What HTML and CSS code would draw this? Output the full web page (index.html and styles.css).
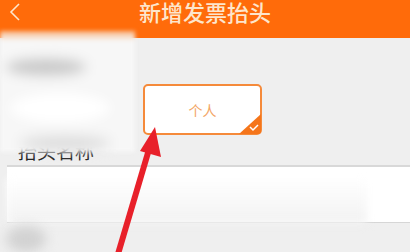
FILE: index.html
```html
<!DOCTYPE html>
<html lang="zh">

<head>
    <meta charset="UTF-8">
    <meta name="viewport" content="width=device-width, initial-scale=1.0">
    <title>新增发票抬头</title>
    <link rel="stylesheet" href="styles.css">
</head>

<body>

    <div class="header">
        <span class="back">
            <svg width="12" height="18" viewBox="0 0 12 18">
                <path d="M10 1 L2 9 L10 17" fill="none" stroke="#fde6cc" stroke-width="1.6" />
            </svg>
        </span>
        <h1 class="title">新增发票抬头</h1>
    </div>

    <div class="content">
        <div class="types">
            <div class="type-card">
                <span>个人</span>
                <span class="corner">
                    <svg width="22" height="20" viewBox="0 0 22 20">
                        <path d="M22 0 L22 17 Q22 20 19 20 L0 20 Z" fill="#f5751a" />
                        <path d="M11 13 L14 16 L19 11" fill="none" stroke="#fff" stroke-width="1.5" />
                    </svg>
                </span>
            </div>
        </div>

        <div class="field-label">抬头名称</div>
        <div class="field-input"></div>
    </div>

    <div class="blur-panel">
        <div class="blob blob-a"></div>
        <div class="blob blob-b"></div>
        <div class="blob blob-c"></div>
    </div>
    <div class="blur-input"></div>
    <div class="blob blob-d"></div>

    <svg class="arrow" width="410" height="252" viewBox="0 0 410 252">
        <path d="M118 254 L150 146" stroke="#e8202a" stroke-width="6" fill="none" />
        <path d="M155 127 L161 157 L140 151 Z" fill="#e8202a" />
    </svg>

</body>

</html>
```

FILE: styles.css
```css
body {
    margin: 0;
    padding: 0;
    background-color: #efefef;
    font-family: "Noto Sans CJK SC", "Noto Sans", sans-serif;
    width: 410px;
    height: 252px;
    overflow: hidden;
    position: relative;
}

.header {
    height: 38px;
    background-color: #ff6b0a;
    display: flex;
    align-items: flex-start;
    position: relative;
}

.back {
    position: absolute;
    left: 9px;
    top: 2px;
}

.title {
    margin: 0 auto;
    font-size: 22px;
    font-weight: 500;
    color: #fde6cc;
    line-height: 22px;
}

.types {
    padding: 46px 0 0 143px;
}

.type-card {
    width: 115px;
    height: 47px;
    background-color: #fff;
    border: 2px solid #f58a3a;
    border-radius: 5px;
    display: flex;
    align-items: center;
    justify-content: center;
    position: relative;
    font-size: 14px;
    color: #f3a565;
}

.corner {
    position: absolute;
    right: -1px;
    bottom: -1px;
    height: 20px;
}

.field-label {
    margin: 2px 0 0 18px;
    height: 28px;
    font-size: 19px;
    line-height: 28px;
    color: #222;
    overflow: hidden;
}

.field-input {
    margin-left: 7px;
    height: 55px;
    background-color: #fff;
    border-top: 2px solid #d8d8d8;
    border-bottom: 1px solid #d6d6d6;
}

.blur-panel {
    position: absolute;
    left: 0;
    top: 31px;
    width: 135px;
    height: 121px;
    background: linear-gradient(#f8b888 0, #f7f7f7 10px, #f7f7f7 100%);
    filter: blur(2px);
}

.blob {
    position: absolute;
    border-radius: 50%;
    filter: blur(6px);
}

.blob-a {
    left: 6px;
    top: 28px;
    width: 80px;
    height: 16px;
    background-color: #c8c8c8;
}

.blob-b {
    left: 10px;
    top: 62px;
    width: 100px;
    height: 30px;
    background-color: #ffffff;
}

.blob-c {
    left: 20px;
    top: 105px;
    width: 90px;
    height: 14px;
    background-color: #dcdcdc;
}

.blur-input {
    position: absolute;
    left: 7px;
    top: 178px;
    width: 360px;
    height: 46px;
    background: linear-gradient(#ffffff, #f2f2f2);
    filter: blur(4px);
}

.blob-d {
    left: 6px;
    top: 226px;
    width: 40px;
    height: 26px;
    background-color: #d2d2d2;
}

.arrow {
    position: absolute;
    left: 0;
    top: 0;
}
```
